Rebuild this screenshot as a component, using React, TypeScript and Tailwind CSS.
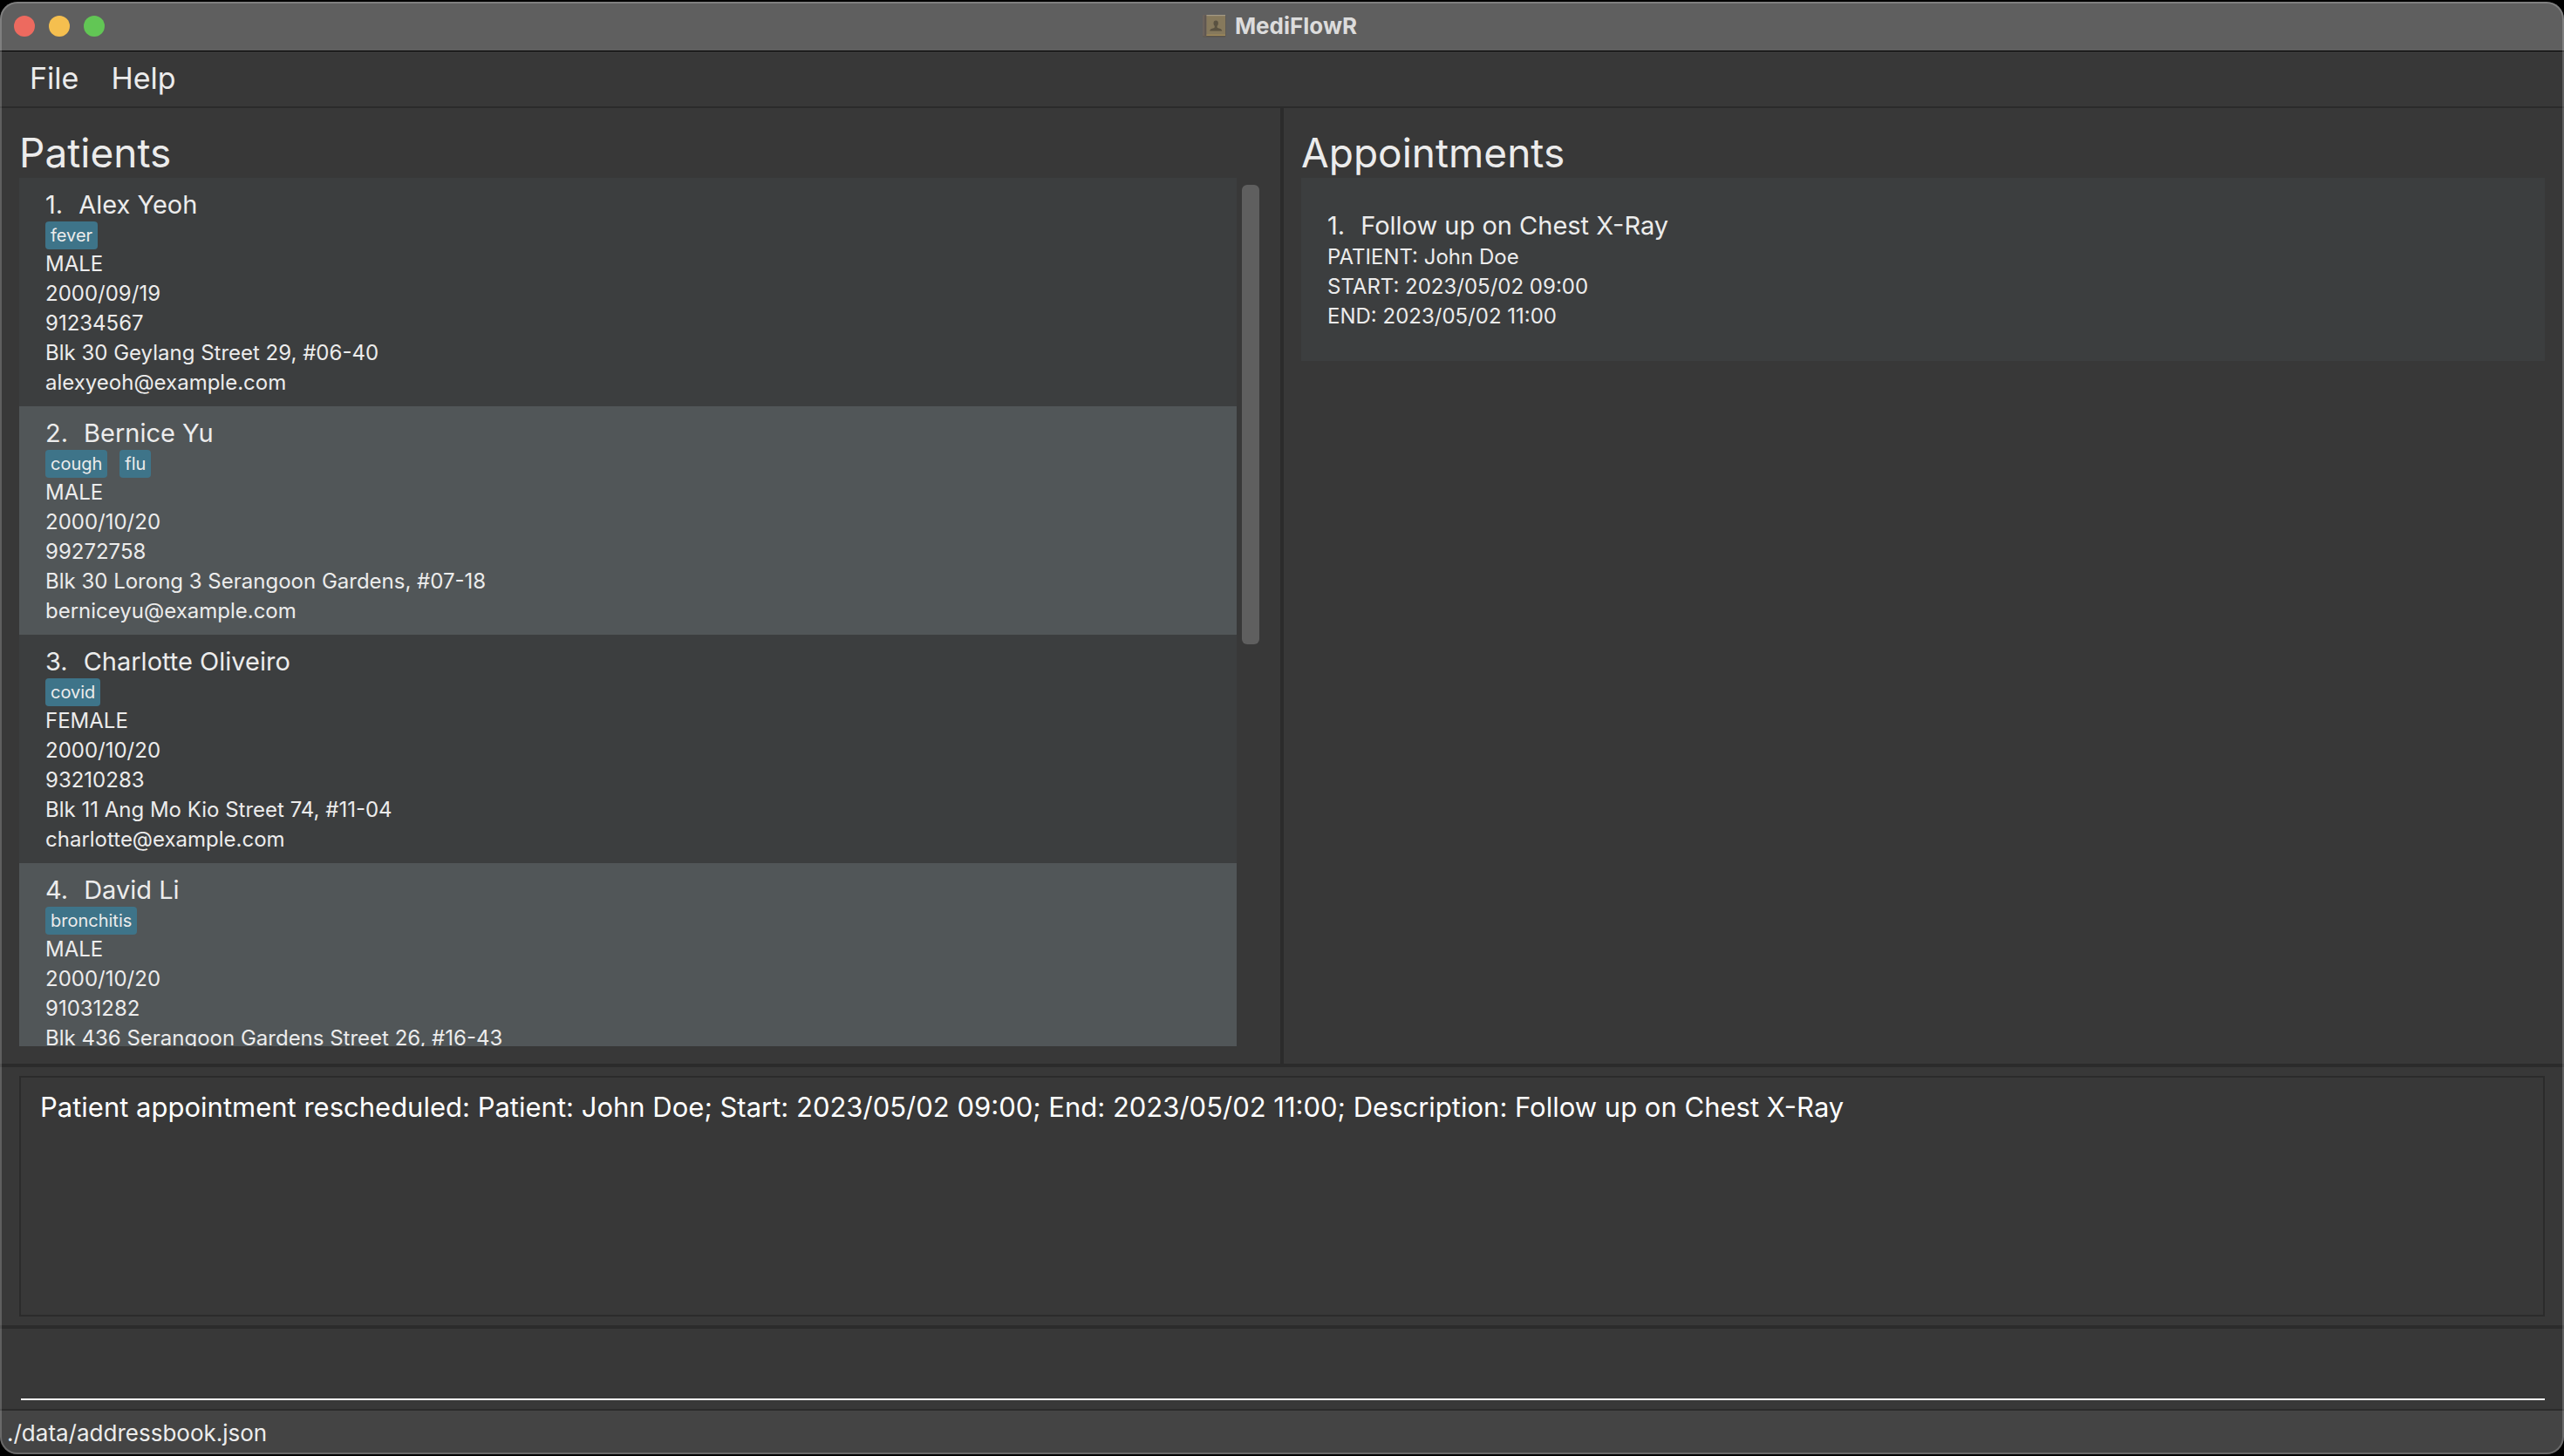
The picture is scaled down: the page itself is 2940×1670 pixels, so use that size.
type Patient = {
  name: string;
  tags: string[];
  gender: string;
  birth: string;
  phone: string;
  address: string;
  email: string;
};

const patients: Patient[] = [
  {
    name: "Alex Yeoh",
    tags: ["fever"],
    gender: "MALE",
    birth: "2000/09/19",
    phone: "91234567",
    address: "Blk 30 Geylang Street 29, #06-40",
    email: "alexyeoh@example.com",
  },
  {
    name: "Bernice Yu",
    tags: ["cough", "flu"],
    gender: "MALE",
    birth: "2000/10/20",
    phone: "99272758",
    address: "Blk 30 Lorong 3 Serangoon Gardens, #07-18",
    email: "berniceyu@example.com",
  },
  {
    name: "Charlotte Oliveiro",
    tags: ["covid"],
    gender: "FEMALE",
    birth: "2000/10/20",
    phone: "93210283",
    address: "Blk 11 Ang Mo Kio Street 74, #11-04",
    email: "charlotte@example.com",
  },
  {
    name: "David Li",
    tags: ["bronchitis"],
    gender: "MALE",
    birth: "2000/10/20",
    phone: "91031282",
    address: "Blk 436 Serangoon Gardens Street 26, #16-43",
    email: "",
  },
];

const appointments = [
  {
    title: "Follow up on Chest X-Ray",
    patient: "John Doe",
    start: "2023/05/02 09:00",
    end: "2023/05/02 11:00",
  },
];

const resultMessage =
  "Patient appointment rescheduled: Patient: John Doe; Start: 2023/05/02 09:00; End: 2023/05/02 11:00; Description: Follow up on Chest X-Ray";

function BookIcon() {
  return (
    <svg viewBox="0 0 28 28" className="size-7" aria-hidden="true">
      <rect x="1" y="1.5" width="26.5" height="25" rx="1.5" fill="#5b554b" />
      <rect x="1" y="1" width="5" height="24.5" rx="1" fill="#6b625c" />
      <rect x="3.6" y="1.5" width="1" height="23.5" fill="#564f4a" />
      <rect x="5.5" y="1" width="21.5" height="24" fill="#86795c" />
      <rect x="5.5" y="1" width="21.5" height="1.2" fill="#a39a86" />
      <rect x="5.5" y="23.6" width="21.5" height="1.4" fill="#a08a5a" />
      <path
        d="M16.200 7.500c-1.800 0-2.700 1.200-2.700 3 0 1.500.5 2.600 1.300 3.300v1.300c0 .6-.4.900-1.200 1.200-2.300.8-4.400 1.100-4.400 3.200h14c0-2.100-2.100-2.400-4.400-3.200-.8-.3-1.200-.6-1.200-1.200v-1.300c.8-.7 1.300-1.800 1.300-3.300 0-1.800-.9-3-2.700-3z"
        fill="#5a5241"
      />
    </svg>
  );
}

function TitleBar() {
  return (
    <header className="grid h-[57px] shrink-0 grid-cols-3 items-center border-b border-black bg-[#5f5f5f]">
      <div className="flex gap-4 pl-4">
        <button type="button" aria-label="Close" className="size-6 rounded-full bg-[#ed6a5f]" />
        <button type="button" aria-label="Minimize" className="size-6 rounded-full bg-[#f5bf4f]" />
        <button type="button" aria-label="Zoom" className="size-6 rounded-full bg-[#62c655]" />
      </div>
      <h1 className="flex items-center justify-center gap-2.5 pr-1.5 text-[26px] leading-8 font-bold text-[#dcdcdc]">
        <BookIcon />
        MediFlowR
      </h1>
    </header>
  );
}

function PatientRow({ patient, index }: { patient: Patient; index: number }) {
  return (
    <li className="bg-[#3c3e3f] pt-3 pb-2.5 pl-[30px] text-[24px] leading-[34px] even:bg-[#515658]">
      <h3 className="flex gap-[18px] text-[29px] leading-[38px]">
        <span>{index}.</span>
        {patient.name}
      </h3>
      <div className="flex gap-3.5">
        {patient.tags.map((tag) => (
          <span key={tag} className="rounded bg-[#3e7489] px-1.5 text-[20px] leading-8">
            {tag}
          </span>
        ))}
      </div>
      <p>{patient.gender}</p>
      <p>{patient.birth}</p>
      <p>{patient.phone}</p>
      <p>{patient.address}</p>
      <p>{patient.email}</p>
    </li>
  );
}

export default function App() {
  return (
    <div className="h-screen bg-black py-0.5">
      <div className="relative flex h-full flex-col overflow-hidden rounded-[20px] bg-[#383838] font-['Inter',sans-serif] text-[#ececec]">
        <TitleBar />
        <nav className="flex h-[65px] shrink-0 items-center gap-[37px] border-b-2 border-[#2b2b2b] pb-0.5 pl-[34px] text-[34px] leading-10">
          <button type="button">File</button>
          <button type="button">Help</button>
        </nav>

        <main className="grid min-h-0 flex-1 grid-cols-[minmax(0,1fr)_4px_minmax(0,1fr)] grid-rows-[minmax(0,1fr)]">
          <section className="flex flex-col pt-[22px] pb-5 pl-[22px]">
            <h2 className="text-[46px] leading-[58px]">Patients</h2>
            <div className="flex min-h-0 flex-1 gap-1.5 pr-6">
              <ol className="min-w-0 flex-1 overflow-hidden">
                {patients.map((patient, i) => (
                  <PatientRow key={patient.name} patient={patient} index={i + 1} />
                ))}
              </ol>
              <div className="w-5 py-2">
                <div className="h-[53.8%] rounded-md bg-[#5f5f5f]" />
              </div>
            </div>
          </section>
          <div className="bg-[#2b2b2b]" />
          <section className="pt-[22px] pr-[22px] pl-5">
            <h2 className="text-[46px] leading-[58px]">Appointments</h2>
            <ol>
              {appointments.map((item, i) => (
                <li
                  key={item.title}
                  className="bg-[#3c3e3f] pt-9 pb-[34px] pl-[30px] text-[24px] leading-[34px]"
                >
                  <h3 className="flex gap-[18px] text-[29px] leading-[38px]">
                    <span>{i + 1}.</span>
                    {item.title}
                  </h3>
                  <p>PATIENT: {item.patient}</p>
                  <p>START: {item.start}</p>
                  <p>END: {item.end}</p>
                </li>
              ))}
            </ol>
          </section>
        </main>

        <section className="h-[304px] shrink-0 border-y-4 border-[#2b2b2b] px-[22px] py-2.5">
          <textarea
            readOnly
            aria-label="Result"
            value={resultMessage}
            className="block size-full resize-none border-2 border-[#2b2b2b] bg-transparent px-[22px] py-3.5 text-[31px] leading-10 text-white outline-none"
          />
        </section>

        <div className="shrink-0 pr-[22px] pb-2.5 pl-6">
          <input
            type="text"
            aria-label="Command"
            className="block h-[82px] w-full border-b-2 border-white bg-transparent text-[31px] text-white outline-none"
          />
        </div>

        <footer className="flex h-[52px] shrink-0 items-center border-t-2 border-[#2b2b2b] bg-[#444444] pt-0.5 pl-2 text-[26px] leading-8">
          ./data/addressbook.json
        </footer>

        <div className="pointer-events-none absolute inset-0 rounded-[20px] border-2 border-white/20" />
      </div>
    </div>
  );
}
